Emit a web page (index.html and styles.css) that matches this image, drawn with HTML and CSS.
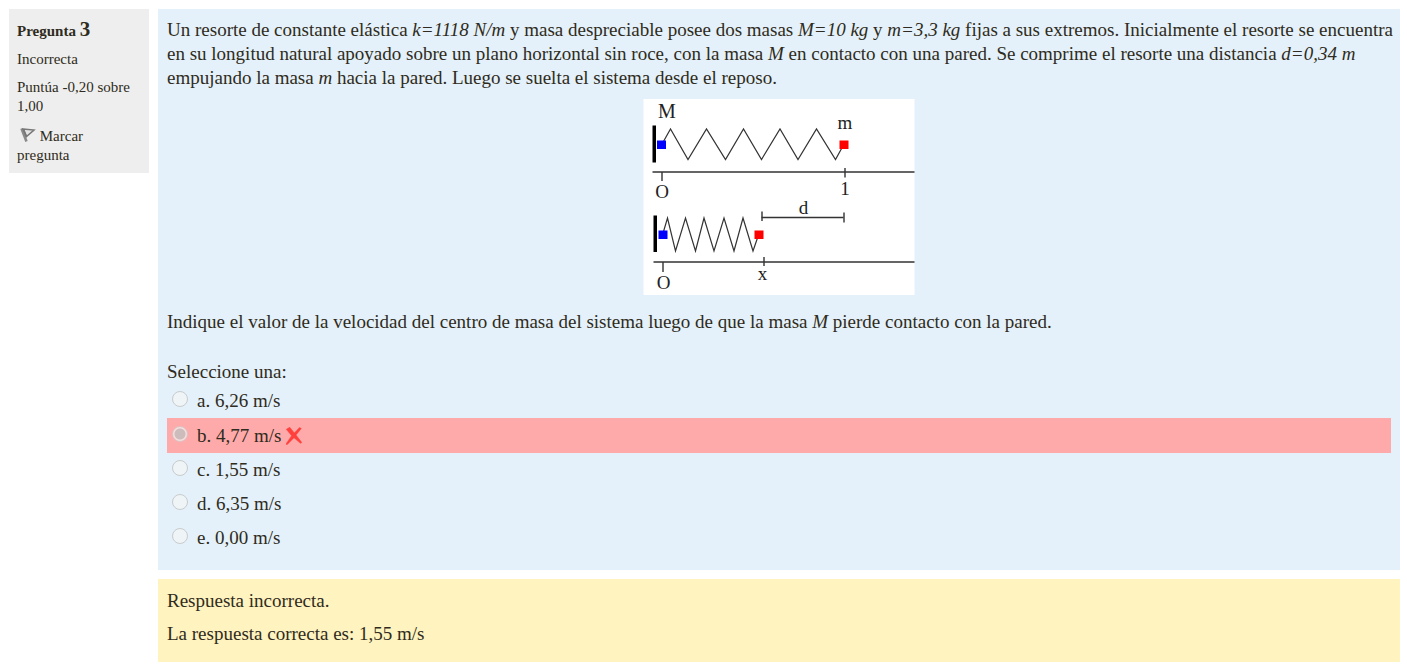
FILE: index.html
```html
<!DOCTYPE html>
<html lang="es">
<head>
<meta charset="utf-8">
<meta name="viewport" content="width=device-width, initial-scale=1">
<title>Pregunta 3</title>
<link rel="stylesheet" href="styles.css">
</head>
<body>
<main class="question">
  <aside class="info">
    <h3 class="info-title">Pregunta <span class="info-number">3</span></h3>
    <p class="info-state">Incorrecta</p>
    <p class="info-grade">Puntúa -0,20 sobre 1,00</p>
    <a class="info-flag" href="#"><svg class="flag-icon" viewBox="0 0 16 16" aria-hidden="true"><path d="M1.500 1.500 6.500 14.500" fill="none" stroke="#8a8a8a" stroke-width="2.600"/><path d="M3 2 14 3 6.500 9.500Z" fill="#e4e4e4" stroke="#777" stroke-width="1.500"/><path d="M3.500 2 6.500 9.500" stroke="#777" stroke-width="1.500"/></svg> Marcar pregunta</a>
  </aside>
  <div class="content">
    <section class="formulation">
      <p class="statement">Un resorte de constante elástica <em>k=1118 N/m</em> y masa despreciable posee dos masas <em>M=10 kg</em> y <em>m=3,3 kg</em> fijas a sus extremos. Inicialmente el resorte se encuentra en su longitud natural apoyado sobre un plano horizontal sin roce, con la masa <em>M</em> en contacto con una pared. Se comprime el resorte una distancia <em>d=0,34 m</em> empujando la masa <em>m</em> hacia la pared. Luego se suelta el sistema desde el reposo.</p>
      <svg class="diagram" viewBox="643 99 271 196" role="img" aria-label="Resorte en su longitud natural y comprimido">
        <rect x="643" y="99" width="271" height="196" fill="#fff"/>
        <g fill="none" stroke="#333" stroke-width="1.2">
          <path d="M661 145 670 129 687.500 159.500 706 129 725 159.500 743 129 761 159.500 779.500 129 797.500 159.500 816 129 835 159.500 843 145"/>
          <path d="M662 235 667 218 675 251 685 218 695 251 703.500 218 713.500 251 723.500 218 733.500 251 742.500 218 752.500 251 758 235"/>
        </g>
        <g fill="none" stroke="#333" stroke-width="1.400">
          <path d="M652 172H914M661.500 172V181M653 262H914M662.500 262V272M761 217.500H843"/>
          <path d="M844.500 168V177.500M763.500 257V266M761.500 211.500V221M843.500 212.500V222.500"/>
        </g>
        <path d="M652 125.500H655.500V162.500H652ZM653 215.500H656.500V252H653Z" fill="#000"/>
        <path d="M656.500 140.500H665.500V149H656.500ZM658 230.500H667V239H658Z" fill="#00f"/>
        <path d="M839 140.500H848V149H839ZM754 230.500H763V239H754Z" fill="#f00"/>
        <g class="diagram-text">
          <text x="666.500" y="118" font-size="20">M</text>
          <text x="844.500" y="129" font-size="19">m</text>
          <text x="844.500" y="195" font-size="19">1</text>
          <text x="803" y="214" font-size="19">d</text>
          <text x="762" y="280" font-size="19">x</text>
          <text x="661.500" y="198" font-size="19">O</text>
          <text x="663" y="289" font-size="19">O</text>
        </g>
      </svg>
      <p class="ask">Indique el valor de la velocidad del centro de masa del sistema luego de que la masa <em>M</em> pierde contacto con la pared.</p>
      <fieldset class="answers">
        <legend class="prompt">Seleccione una:</legend>
        <div class="answer"><input class="radio" type="radio" name="answer" id="a" disabled><label for="a">a. 6,26 m/s</label></div>
        <div class="answer answer-wrong"><input class="radio" type="radio" name="answer" id="b" checked disabled><label for="b">b. 4,77 m/s</label><svg class="cross" viewBox="0 0 16 18" role="img" aria-label="Incorrecta"><path d="M0.300 2.300 3.800 0.300 8.300 6 13.500 0.500 15.300 1.500 10 8 15.800 15.500 14.500 16.300 8 10.800 1 17.800 0 17 5.600 8.700Z" fill="#ff403c" stroke="#ff403c" stroke-width="0.500"/></svg></div>
        <div class="answer"><input class="radio" type="radio" name="answer" id="c" disabled><label for="c">c. 1,55 m/s</label></div>
        <div class="answer"><input class="radio" type="radio" name="answer" id="d" disabled><label for="d">d. 6,35 m/s</label></div>
        <div class="answer"><input class="radio" type="radio" name="answer" id="e" disabled><label for="e">e. 0,00 m/s</label></div>
      </fieldset>
    </section>
    <section class="outcome">
      <p>Respuesta incorrecta.</p>
      <p>La respuesta correcta es: 1,55 m/s</p>
    </section>
  </div>
</main>
</body>
</html>
```
FILE: styles.css
```css
* { box-sizing: border-box; }
body {
  margin: 0;
  background: #fff;
  color: #2f2b20;
  font-family: "Palatino Linotype", Palatino, "Liberation Serif", serif;
  font-size: 19px;
  line-height: 24px;
}
p, h3 { margin: 0; }
.question {
  display: flex;
  align-items: flex-start;
  gap: 9px;
  padding: 9px 7px 9px 9px;
}
.info {
  flex: 0 0 140px;
  padding: 8px 8px 8px;
  background: #eee;
  font-size: 15px;
  line-height: 19px;
}
.info-title { font-size: 15px; line-height: 24px; }
.info-number { font-size: 21px; }
.info-state { margin-top: 7px; }
.info-grade { margin-top: 9px; }
.info-flag {
  display: block;
  margin-top: 11px;
  padding-right: 12px;
  color: inherit;
  text-decoration: none;
}
.flag-icon { width: 16px; height: 16px; margin: 0 0 0 3px; vertical-align: -2px; }
.content { flex: 1; min-width: 0; }
.formulation { padding: 9px 9px 15px; background: #e4f1fa; }
.statement { margin-right: -6px; }
.diagram { display: block; width: 272px; height: 196px; margin: 9px auto 15px; }
.diagram-text { font-family: "Liberation Serif", serif; fill: #222; text-anchor: middle; }
.answers { min-width: 0; margin: 26px 0 0; padding: 0; border: 0; }
.prompt { padding: 0; }
.answer {
  display: flex;
  align-items: center;
  min-height: 34px;
  padding-left: 5px;
}
.answer-wrong { min-height: 35px; background: #ffaaaa; }
.radio {
  appearance: none;
  width: 16px;
  height: 16px;
  margin: 0 9px 4px 0;
  border: 1px solid #c8cccc;
  border-radius: 50%;
  background: #eff4f6;
}
.radio:checked {
  border: 1px solid #dcc4c4;
  background: radial-gradient(circle, #cdbcbc 0 5px, #f6dede 6px);
}
.cross { width: 16px; height: 18px; margin-left: 5px; }
.outcome {
  margin-top: 9px;
  padding: 10px 9px 16px;
  background: #fff3bf;
}
.outcome p + p { margin-top: 9px; }
```
